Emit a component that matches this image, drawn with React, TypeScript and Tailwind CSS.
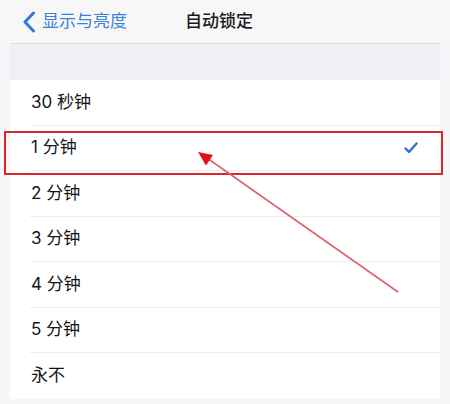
const options = ['30 秒钟', '1 分钟', '2 分钟', '3 分钟', '4 分钟', '5 分钟', '永不'];

export default function App() {
  return (
    <div
      className="relative h-[404px] w-[450px] overflow-hidden bg-[#f6f6f8] text-[17px]"
      style={{ fontFamily: 'Inter, "Noto Sans CJK SC", sans-serif' }}
    >
      {/* nav bar */}
      <div className="flex h-[43px] items-center bg-[#f7f7f8] pl-[22px]">
        <div className="flex items-center text-[#3a82d6]">
          <svg width="14" height="22" viewBox="0 0 14 22" fill="none">
            <path d="M11.5 2 L3 11 L11.5 20" stroke="#2f7ad4" strokeWidth="3" strokeLinecap="round" strokeLinejoin="round" />
          </svg>
          <span className="ml-[6px] leading-none">显示与亮度</span>
        </div>
        <span className="ml-[58px] font-medium leading-none text-[#1a1a1a]">自动锁定</span>
      </div>

      <div className="mx-[10px]">
        <div className="h-[37px] border-t border-[#dfdfe4] bg-[#efeff4]" />
        <div className="bg-white pl-[20px]">
          {options.map((label, i) => (
            <div
              key={label}
              className={
                'flex h-[45.5px] items-center justify-between pr-[22px] ' +
                (i < options.length - 1 ? 'border-b border-[#ececef]' : '')
              }
            >
              <span className="pl-[1px] text-[#151515]">{label}</span>
              {label === '1 分钟' && (
                <svg width="14" height="12" viewBox="0 0 14 12" fill="none">
                  <path d="M1.5 6.5 L5 10 L12.5 1.5" stroke="#2f73c2" strokeWidth="2.4" strokeLinecap="round" strokeLinejoin="round" />
                </svg>
              )}
            </div>
          ))}
        </div>
      </div>

      {/* highlight box */}
      <div className="absolute left-[4px] top-[131px] h-[44px] w-[439px] border-2 border-[#d8262c]" />

      {/* arrow */}
      <svg className="pointer-events-none absolute left-0 top-0" width="450" height="404" viewBox="0 0 450 404">
        <line x1="398" y1="292" x2="207" y2="158" stroke="#d9656d" strokeWidth="1.6" />
        <polygon points="198,152 213,155 206,165.5" fill="#e3101b" />
      </svg>
    </div>
  );
}
